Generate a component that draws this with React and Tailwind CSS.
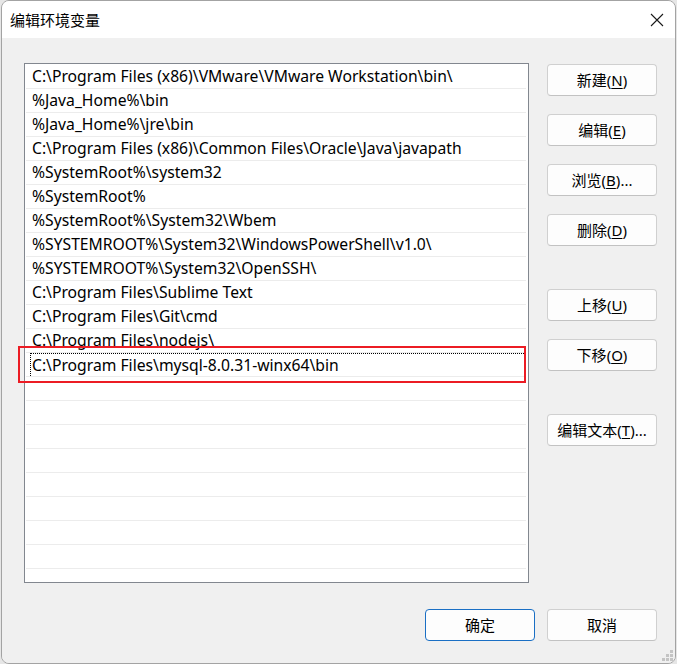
import React from "react";

const paths = [
  "C:\\Program Files (x86)\\VMware\\VMware Workstation\\bin\\",
  "%Java_Home%\\bin",
  "%Java_Home%\\jre\\bin",
  "C:\\Program Files (x86)\\Common Files\\Oracle\\Java\\javapath",
  "%SystemRoot%\\system32",
  "%SystemRoot%",
  "%SystemRoot%\\System32\\Wbem",
  "%SYSTEMROOT%\\System32\\WindowsPowerShell\\v1.0\\",
  "%SYSTEMROOT%\\System32\\OpenSSH\\",
  "C:\\Program Files\\Sublime Text",
  "C:\\Program Files\\Git\\cmd",
  "C:\\Program Files\\nodejs\\",
  "C:\\Program Files\\mysql-8.0.31-winx64\\bin",
];

const SELECTED = 12;
const ROW_COUNT = 22;

const uiFont = { fontFamily: '"Noto Sans", "Noto Sans CJK SC", sans-serif' };

function DlgButton({ label, accel, suffix = "", primary = false, className = "" }) {
  return (
    <button
      type="button"
      className={
        "flex h-[32px] w-[110px] items-center justify-center rounded-[4px] border bg-[#fdfdfd] text-[15px] leading-none text-black " +
        (primary ? "border-[#1a6fc4] " : "border-[#d0d0d0] border-b-[#c2c2c2] ") +
        className
      }
    >
      <span>{label}</span>
      {accel ? (
        <span>
          (<span className="underline underline-offset-2">{accel}</span>){suffix}
        </span>
      ) : null}
    </button>
  );
}

function CloseIcon() {
  return (
    <svg width="14" height="14" viewBox="0 0 14 14" fill="none" stroke="#1a1a1a" strokeWidth="1.1">
      <path d="M1 1 L13 13 M13 1 L1 13" />
    </svg>
  );
}

function ResizeGrip() {
  const dots = [
    [8, 0],
    [4, 4], [8, 4],
    [0, 8], [4, 8], [8, 8],
  ];
  return (
    <svg width="11" height="11" viewBox="0 0 11 11" className="absolute bottom-[2px] right-[2px]">
      {dots.map(([x, y]) => (
        <rect key={`${x}-${y}`} x={x} y={y} width="3" height="3" fill="#c4c4c4" />
      ))}
    </svg>
  );
}

export default function App() {
  const rows = Array.from({ length: ROW_COUNT }, (_, i) => paths[i] ?? "");

  return (
    <div className="h-[664px] w-[677px] bg-[#e6e6e6] pl-px" style={uiFont}>
      <div className="relative flex h-[664px] w-[675px] flex-col overflow-hidden rounded-[8px] border border-[#a3a3a3]">
        {/* title bar */}
        <div className="flex h-[37px] shrink-0 items-center justify-between bg-white pl-[8px] pr-[11px]">
          <span className="pt-[1px] text-[15px] text-black">编辑环境变量</span>
          <CloseIcon />
        </div>

        {/* body */}
        <div className="flex flex-1 flex-col bg-[#f0f0f0] pl-[22px]">
          <div className="flex items-start">
            <div className="relative mt-[25px] h-[520px] w-[505px]">
              <div className="h-full w-full overflow-hidden border border-[#82878f] bg-white pl-px pr-[2px] pt-px">
                {rows.map((text, i) => (
                  <div key={i} className="h-[24px] border-b border-[#ececec]">
                    <div
                      className={
                        "flex h-[23px] items-center whitespace-nowrap pt-px text-[15.7px] text-black " +
                        (i === SELECTED ? "ml-[4px] border-l border-t border-dotted border-black pl-[1px]" : "pl-[6px]")
                      }
                    >
                      {text}
                    </div>
                  </div>
                ))}
              </div>
              {/* annotation box */}
              <div className="absolute left-[-6px] top-[283px] h-[37px] w-[508px] border-2 border-[#ec1c24]" />
            </div>

            <div className="ml-[18px] mt-[26px] flex flex-col">
              <DlgButton label="新建" accel="N" />
              <DlgButton label="编辑" accel="E" className="mt-[18px]" />
              <DlgButton label="浏览" accel="B" suffix="..." className="mt-[18px]" />
              <DlgButton label="删除" accel="D" className="mt-[18px]" />
              <DlgButton label="上移" accel="U" className="mt-[43px]" />
              <DlgButton label="下移" accel="O" className="mt-[18px]" />
              <DlgButton label="编辑文本" accel="T" suffix="..." className="mt-[43px]" />
            </div>
          </div>

          <div className="mt-[26px] flex justify-end gap-[12px] pr-[18px]">
            <DlgButton label="确定" primary />
            <DlgButton label="取消" />
          </div>
        </div>
        <ResizeGrip />
      </div>
    </div>
  );
}
